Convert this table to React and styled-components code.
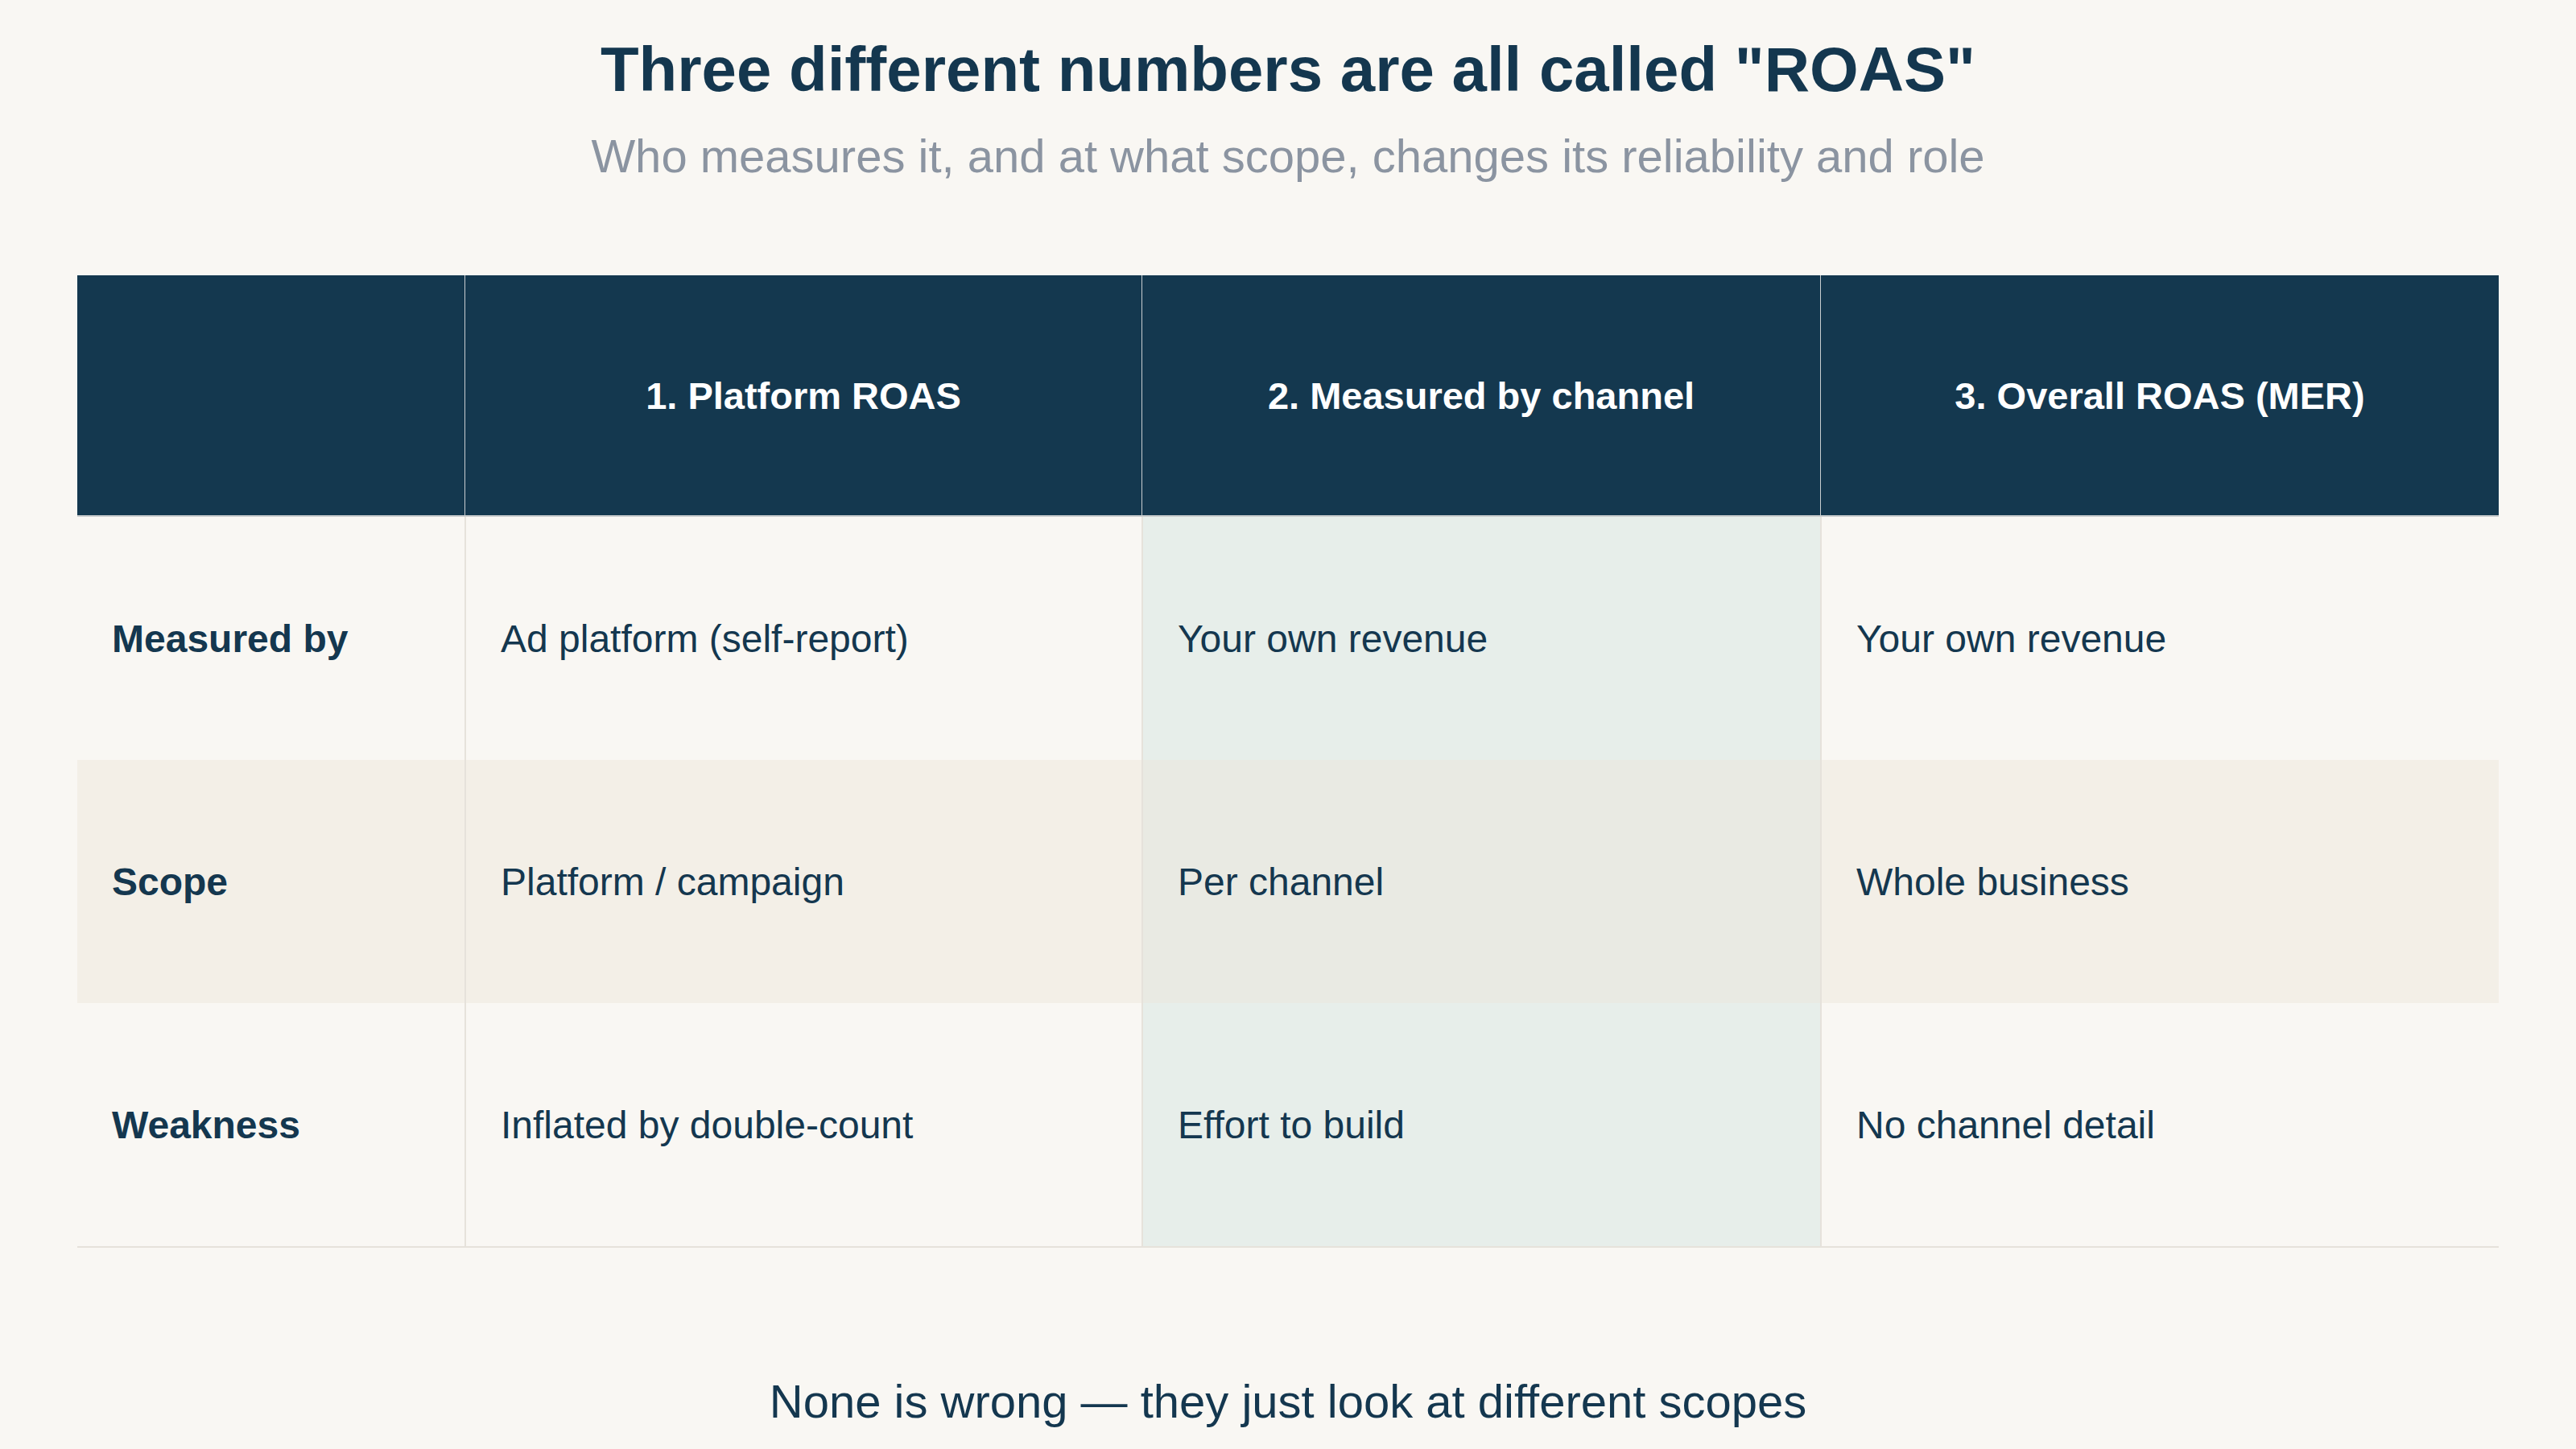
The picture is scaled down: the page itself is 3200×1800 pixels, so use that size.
import React from 'react';
import styled, { createGlobalStyle } from 'styled-components';

const Colors = {
    Page: '#f9f7f3',
    Ink: '#14374f',
    Muted: '#8b94a1',
    Head: '#14384f',
    Stripe: '#f3efe7',
    Focus: '#e7eeea',
    FocusStripe: '#e9eae3',
    Line: '#e6e2db',
};

const GlobalStyle = createGlobalStyle`
    html, body {
        margin: 0;
        padding: 0;
        background: ${Colors.Page};
    }
    body {
        font-family: 'Liberation Sans', Arial, sans-serif;
        color: ${Colors.Ink};
    }
`;

const Page = styled.div`
    width: 3200px;
    height: 1800px;
    box-sizing: border-box;
    padding: 40px 96px 0;
    display: flex;
    flex-direction: column;
    align-items: center;
    overflow: hidden;
`;

const Title = styled.h1`
    margin: 0;
    font-size: 78px;
    line-height: 1.2;
    font-weight: 700;
    color: ${Colors.Ink};
`;

const Subtitle = styled.p`
    margin: 25px 0 0;
    font-size: 58px;
    line-height: 1.2;
    color: ${Colors.Muted};
`;

const Table = styled.div`
    margin-top: 114px;
    width: 100%;
    display: grid;
    grid-template-columns: 481px 841px 843px 843px;
    grid-template-rows: 300px repeat(3, 302px);
    border-bottom: 2px solid ${Colors.Line};
`;

const HeadCell = styled.div`
    background: ${Colors.Head};
    color: #ffffff;
    font-size: 47px;
    font-weight: 700;
    display: flex;
    align-items: center;
    justify-content: center;
    border-bottom: 2px solid #c9cccd;
    border-left: ${(p) => (p.first ? 'none' : '1px solid #c9ced1')};
`;

const Cell = styled.div`
    display: flex;
    align-items: center;
    padding-left: 43px;
    font-size: 48px;
    font-weight: ${(p) => (p.first ? 700 : 400)};
    color: ${Colors.Ink};
    background: ${(p) =>
        p.focus
            ? p.stripe
                ? Colors.FocusStripe
                : Colors.Focus
            : p.stripe
            ? Colors.Stripe
            : 'transparent'};
    border-left: ${(p) => (p.first ? 'none' : `2px solid ${Colors.Line}`)};
`;

const Footer = styled.p`
    margin: 156px 0 0;
    font-size: 58px;
    line-height: 1.2;
    color: ${Colors.Ink};
`;

const headers = ['', '1. Platform ROAS', '2. Measured by channel', '3. Overall ROAS (MER)'];

const rows = [
    ['Measured by', 'Ad platform (self-report)', 'Your own revenue', 'Your own revenue'],
    ['Scope', 'Platform / campaign', 'Per channel', 'Whole business'],
    ['Weakness', 'Inflated by double-count', 'Effort to build', 'No channel detail'],
];

const App = () => {
    return (
        <>
            <GlobalStyle />
            <Page>
                <Title>Three different numbers are all called "ROAS"</Title>
                <Subtitle>Who measures it, and at what scope, changes its reliability and role</Subtitle>
                <Table>
                    {headers.map((h, i) => (
                        <HeadCell key={i} first={i === 0}>
                            {h}
                        </HeadCell>
                    ))}
                    {rows.map((row, r) =>
                        row.map((text, c) => (
                            <Cell key={`${r}-${c}`} first={c === 0} focus={c === 2} stripe={r === 1}>
                                {text}
                            </Cell>
                        )),
                    )}
                </Table>
                <Footer>None is wrong — they just look at different scopes</Footer>
            </Page>
        </>
    );
};

export default App;
